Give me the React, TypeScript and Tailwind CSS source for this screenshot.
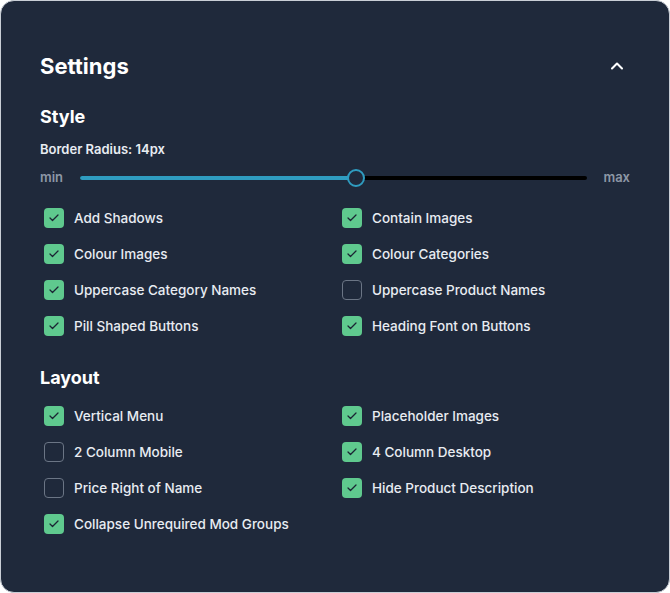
import { ChevronUp, Check } from "lucide-react";

type Opt = { label: string; on: boolean };

const styleOpts: Opt[] = [
  { label: "Add Shadows", on: true },
  { label: "Contain Images", on: true },
  { label: "Colour Images", on: true },
  { label: "Colour Categories", on: true },
  { label: "Uppercase Category Names", on: true },
  { label: "Uppercase Product Names", on: false },
  { label: "Pill Shaped Buttons", on: true },
  { label: "Heading Font on Buttons", on: true },
];

const layoutOpts: Opt[] = [
  { label: "Vertical Menu", on: true },
  { label: "Placeholder Images", on: true },
  { label: "2 Column Mobile", on: false },
  { label: "4 Column Desktop", on: true },
  { label: "Price Right of Name", on: false },
  { label: "Hide Product Description", on: true },
  { label: "Collapse Unrequired Mod Groups", on: true },
];

function Box({ opt }: { opt: Opt }) {
  return (
    <label className="flex h-9 items-center gap-[10px]">
      {opt.on ? (
        <span className="flex h-5 w-5 items-center justify-center rounded-[4px] bg-[#5fc98e]">
          <Check className="h-3 w-3 text-[#1b2433]" strokeWidth={2.5} />
        </span>
      ) : (
        <span className="h-5 w-5 rounded-[4px] border border-[#6b7585]" />
      )}
      <span className="text-[13.5px] font-[450] text-[#e8ecf2]">{opt.label}</span>
    </label>
  );
}

function Grid({ items }: { items: Opt[] }) {
  return (
    <div className="grid grid-cols-[298px_1fr] pl-1">
      {items.map((o) => (
        <Box key={o.label} opt={o} />
      ))}
    </div>
  );
}

export default function App() {
  const pct = 0.545;
  return (
    <div className="h-[593px] w-[670px] bg-white font-['Inter',sans-serif]">
      <div className="h-full w-full rounded-[14px] border border-[#c9ced6] bg-[#1f293b] px-[39px] pt-[49px]">
        <div className="flex items-center justify-between">
          <h1 className="text-[22px] font-bold leading-8 text-white">Settings</h1>
          <ChevronUp className="mr-[3px] h-5 w-5 text-white" strokeWidth={2.5} />
        </div>
        <h2 className="mt-[23px] text-[18px] font-bold leading-6 text-white">Style</h2>
        <p className="mt-[10px] text-[13px] font-semibold leading-5 text-[#e8ecf2]">Border Radius: 14px</p>
        <div className="mt-[9px] flex h-5 items-center">
          <span className="w-10 text-[13px] font-semibold text-[#8d97a6]">min</span>
          <div className="relative h-1 flex-1 rounded-full bg-black">
            <div className="h-1 rounded-full bg-[#2f9cc0]" style={{ width: `${pct * 100}%` }} />
            <div
              className="absolute top-1/2 h-[18px] w-[18px] -translate-x-1/2 -translate-y-1/2 rounded-full border-2 border-[#2f9cc0] bg-[#1f293b]"
              style={{ left: `${pct * 100}%` }}
            />
          </div>
          <span className="w-[43px] text-right text-[13px] font-semibold text-[#8d97a6]">max</span>
        </div>
        <div className="mt-[12px]">
          <Grid items={styleOpts} />
        </div>
        <h2 className="mt-[22px] text-[18px] font-bold leading-6 text-white">Layout</h2>
        <div className="mt-[8px]">
          <Grid items={layoutOpts} />
        </div>
      </div>
    </div>
  );
}
